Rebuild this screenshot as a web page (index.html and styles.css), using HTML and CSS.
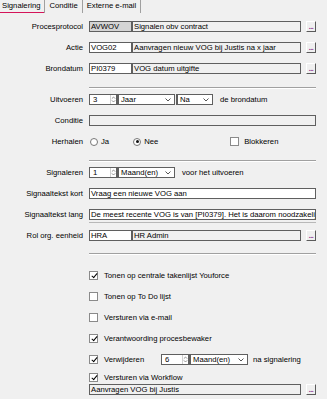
FILE: index.html
```html
<!DOCTYPE html>
<html>
<head>
<meta charset="utf-8">
<link rel="stylesheet" href="styles.css">
</head>
<body>
<div class="tabs">
  <div class="tab active">Signalering</div>
  <div class="tab">Conditie</div>
  <div class="tab">Externe e-mail</div>
</div>
<div class="form">
  <div class="row">
    <div class="lbl">Procesprotocol</div>
    <div class="ctl"><span class="box w-code dis">AVWOV</span><span class="box w-desc ro">Signalen obv contract</span><span class="btn">...</span></div>
  </div>
  <div class="row">
    <div class="lbl">Actie</div>
    <div class="ctl"><span class="box w-code">VOG02</span><span class="box w-desc ro">Aanvragen nieuw VOG bij Justis na x jaar</span><span class="btn">...</span></div>
  </div>
  <div class="row">
    <div class="lbl">Brondatum</div>
    <div class="ctl"><span class="box w-code">PI0379</span><span class="box w-desc ro">VOG datum uitgifte</span><span class="btn">...</span></div>
  </div>
  <div class="sep sep-a"></div>
  <div class="row">
    <div class="lbl">Uitvoeren</div>
    <div class="ctl">
      <span class="spin"><span class="val">3</span><svg class="arr" width="6" height="9" viewBox="0 0 6 9"><path d="M1 3.5 L3 1.5 L5 3.5 M1 5.5 L3 7.5 L5 5.5" fill="none" stroke="#6d6d6d" stroke-width="0.9"/></svg></span>
      <span class="combo w-jaar"><span>Jaar</span><svg class="chev" width="6" height="4" viewBox="0 0 6 4"><path d="M0.5 0.5 L3 3 L5.5 0.5" fill="none" stroke="#555" stroke-width="1"/></svg></span>
      <span class="combo w-na"><span>Na</span><svg class="chev" width="6" height="4" viewBox="0 0 6 4"><path d="M0.5 0.5 L3 3 L5.5 0.5" fill="none" stroke="#555" stroke-width="1"/></svg></span>
      <span class="txt t-bron">de brondatum</span>
    </div>
  </div>
  <div class="row">
    <div class="lbl">Conditie</div>
    <div class="ctl"><span class="box w-full ro"></span></div>
  </div>
  <div class="row">
    <div class="lbl">Herhalen</div>
    <div class="ctl">
      <span class="radio r-ja"></span><span class="txt t-ja">Ja</span>
      <span class="radio on r-nee"></span><span class="txt t-nee">Nee</span>
      <span class="chk c-blok"></span><span class="txt t-blok">Blokkeren</span>
    </div>
  </div>
  <div class="sep sep-a"></div>
  <div class="row">
    <div class="lbl">Signaleren</div>
    <div class="ctl">
      <span class="spin"><span class="val">1</span><svg class="arr" width="6" height="9" viewBox="0 0 6 9"><path d="M1 3.5 L3 1.5 L5 3.5 M1 5.5 L3 7.5 L5 5.5" fill="none" stroke="#6d6d6d" stroke-width="0.9"/></svg></span>
      <span class="combo w-jaar"><span>Maand(en)</span><svg class="chev" width="6" height="4" viewBox="0 0 6 4"><path d="M0.5 0.5 L3 3 L5.5 0.5" fill="none" stroke="#555" stroke-width="1"/></svg></span>
      <span class="txt t-voor">voor het uitvoeren</span>
    </div>
  </div>
  <div class="row">
    <div class="lbl">Signaaltekst kort</div>
    <div class="ctl"><span class="box w-full">Vraag een nieuwe VOG aan</span></div>
  </div>
  <div class="row">
    <div class="lbl">Signaaltekst lang</div>
    <div class="ctl lang"><span class="box w-full">De meest recente VOG is van [PI0379]. Het is daarom noodzakelijk om een nieuwe VOG aan te vragen</span><span class="hline"></span></div>
  </div>
  <div class="row">
    <div class="lbl">Rol org. eenheid</div>
    <div class="ctl"><span class="box w-code">HRA</span><span class="box w-desc ro">HR Admin</span><span class="btn">...</span></div>
  </div>
  <div class="sep sep-b"></div>
  <div class="checks">
    <div class="crow"><span class="chk on"></span><span class="txt">Tonen op centrale takenlijst Youforce</span></div>
    <div class="crow"><span class="chk"></span><span class="txt">Tonen op To Do lijst</span></div>
    <div class="crow"><span class="chk"></span><span class="txt">Versturen via e-mail</span></div>
    <div class="crow"><span class="chk on"></span><span class="txt">Verantwoording procesbewaker</span></div>
    <div class="crow"><span class="chk on"></span><span class="txt t-verw">Verwijderen</span>
      <span class="spin"><span class="val">6</span><svg class="arr" width="6" height="9" viewBox="0 0 6 9"><path d="M1 3.5 L3 1.5 L5 3.5 M1 5.5 L3 7.5 L5 5.5" fill="none" stroke="#6d6d6d" stroke-width="0.9"/></svg></span>
      <span class="combo w-maand"><span>Maand(en)</span><svg class="chev" width="6" height="4" viewBox="0 0 6 4"><path d="M0.5 0.5 L3 3 L5.5 0.5" fill="none" stroke="#555" stroke-width="1"/></svg></span>
      <span class="txt t-na">na signalering</span>
    </div>
    <div class="crow short"><span class="chk on"></span><span class="txt">Versturen via Workflow</span></div>
    <div class="wf"><span class="box w-wf ro">Aanvragen VOG bij Justis</span><span class="btn">...</span></div>
  </div>
</div>
</body>
</html>
```

FILE: styles.css
```css
* { box-sizing: border-box; margin: 0; padding: 0; }
html, body { background: #f0f0f0; }
body {
  font-family: "Liberation Sans", Arial, sans-serif;
  font-size: 7.7px;
  color: #000;
  width: 327px;
  height: 399px;
  overflow: hidden;
}

.tabs { display: flex; height: 14px; }
.tab {
  height: 13px;
  line-height: 12px;
  padding: 0 4px;
  border-right: 1px solid #a0a0a0;
  white-space: nowrap;
}
.tab.active { padding-left: 2px; box-shadow: inset 0 -1px 0 #d4145a; }

.form { display: flex; flex-direction: column; padding-top: 2px; }
.row {
  display: grid;
  grid-template-columns: 83px auto;
  column-gap: 6px;
  align-items: center;
  height: 21px;
}
.lbl { text-align: right; white-space: nowrap; }
.ctl { display: flex; align-items: center; }

.box {
  display: block;
  height: 11px;
  border: 1px solid #5f5f5f;
  background: #fff;
  line-height: 9px;
  padding: 0 1px;
  white-space: nowrap;
  overflow: hidden;
}
.ro { background: #f0f0f0; }
.dis { background: #d4d4d4; }
.w-code { width: 43px; }
.w-desc { width: 169px; }
.w-full { width: 227px; }
.w-wf { width: 212px; }

.btn {
  width: 10px;
  height: 11px;
  margin-left: 5px;
  border: 1px solid;
  border-color: #fff #5a5a5a #5a5a5a #fff;
  color: #8a2f8a;
  font-size: 7px;
  font-weight: bold;
  line-height: 9px;
  text-align: center;
  letter-spacing: -0.5px;
}

.sep {
  margin-left: 89px;
  width: 227px;
  height: 2px;
  border-top: 1px solid #a0a0a0;
  border-bottom: 1px solid #fff;
}
.sep-a { margin-top: 8px; }
.sep-b { margin-top: 7px; margin-bottom: 10px; }

.spin {
  display: flex;
  align-items: center;
  justify-content: space-between;
  width: 28px;
  height: 11px;
  border: 1px solid #5f5f5f;
  background: #fff;
  padding-left: 3px;
}
.arr { display: block; margin-right: 0; border-left: 1px solid #d0d0d0; }
.combo {
  display: flex;
  align-items: center;
  justify-content: space-between;
  height: 11px;
  border: 1px solid #5f5f5f;
  border-left-width: 2px;
  background: #fff;
  padding: 0 3px 0 2px;
  white-space: nowrap;
}
.w-jaar { width: 58px; }
.w-na { width: 37px; margin-left: 1px; }
.w-maand { width: 59px; }
.chev { display: block; }

.txt { white-space: nowrap; }
.t-bron { margin-left: 7px; }
.t-voor { margin-left: 7px; }

.radio {
  width: 8px;
  height: 8px;
  border: 1px solid #777;
  border-radius: 50%;
  background: #fff;
  position: relative;
}
.radio.on::after {
  content: "";
  position: absolute;
  left: 1.5px;
  top: 1.5px;
  width: 3px;
  height: 3px;
  border-radius: 50%;
  background: #111;
}
.r-ja { margin-left: 1px; }
.t-ja { margin-left: 3px; }
.r-nee { margin-left: 24px; }
.t-nee { margin-left: 3px; }
.c-blok { margin-left: 72px; }
.t-blok { margin-left: 5px; }

.chk {
  width: 9px;
  height: 9px;
  border: 1px solid #8a8a8a;
  background: #fff;
  position: relative;
  flex: none;
}
.chk.on::after {
  content: "";
  position: absolute;
  left: 2.5px;
  top: 0px;
  width: 2px;
  height: 5px;
  border: solid #000;
  border-width: 0 1.4px 1.4px 0;
  transform: rotate(40deg);
}

.checks { display: flex; flex-direction: column; padding-left: 89px; }
.crow { display: flex; align-items: center; height: 21px; }
.crow.short { height: 14px; }
.crow .chk + .txt { margin-left: 6px; }
.t-verw { width: 57px; }
.t-na { margin-left: 5px; }
.wf { display: flex; align-items: center; }
.lang { flex-direction: column; align-items: flex-start; margin-top: 3px; }
.hline { display: block; width: 227px; height: 1px; margin-top: 2px; background: #b8b8b8; }
```
